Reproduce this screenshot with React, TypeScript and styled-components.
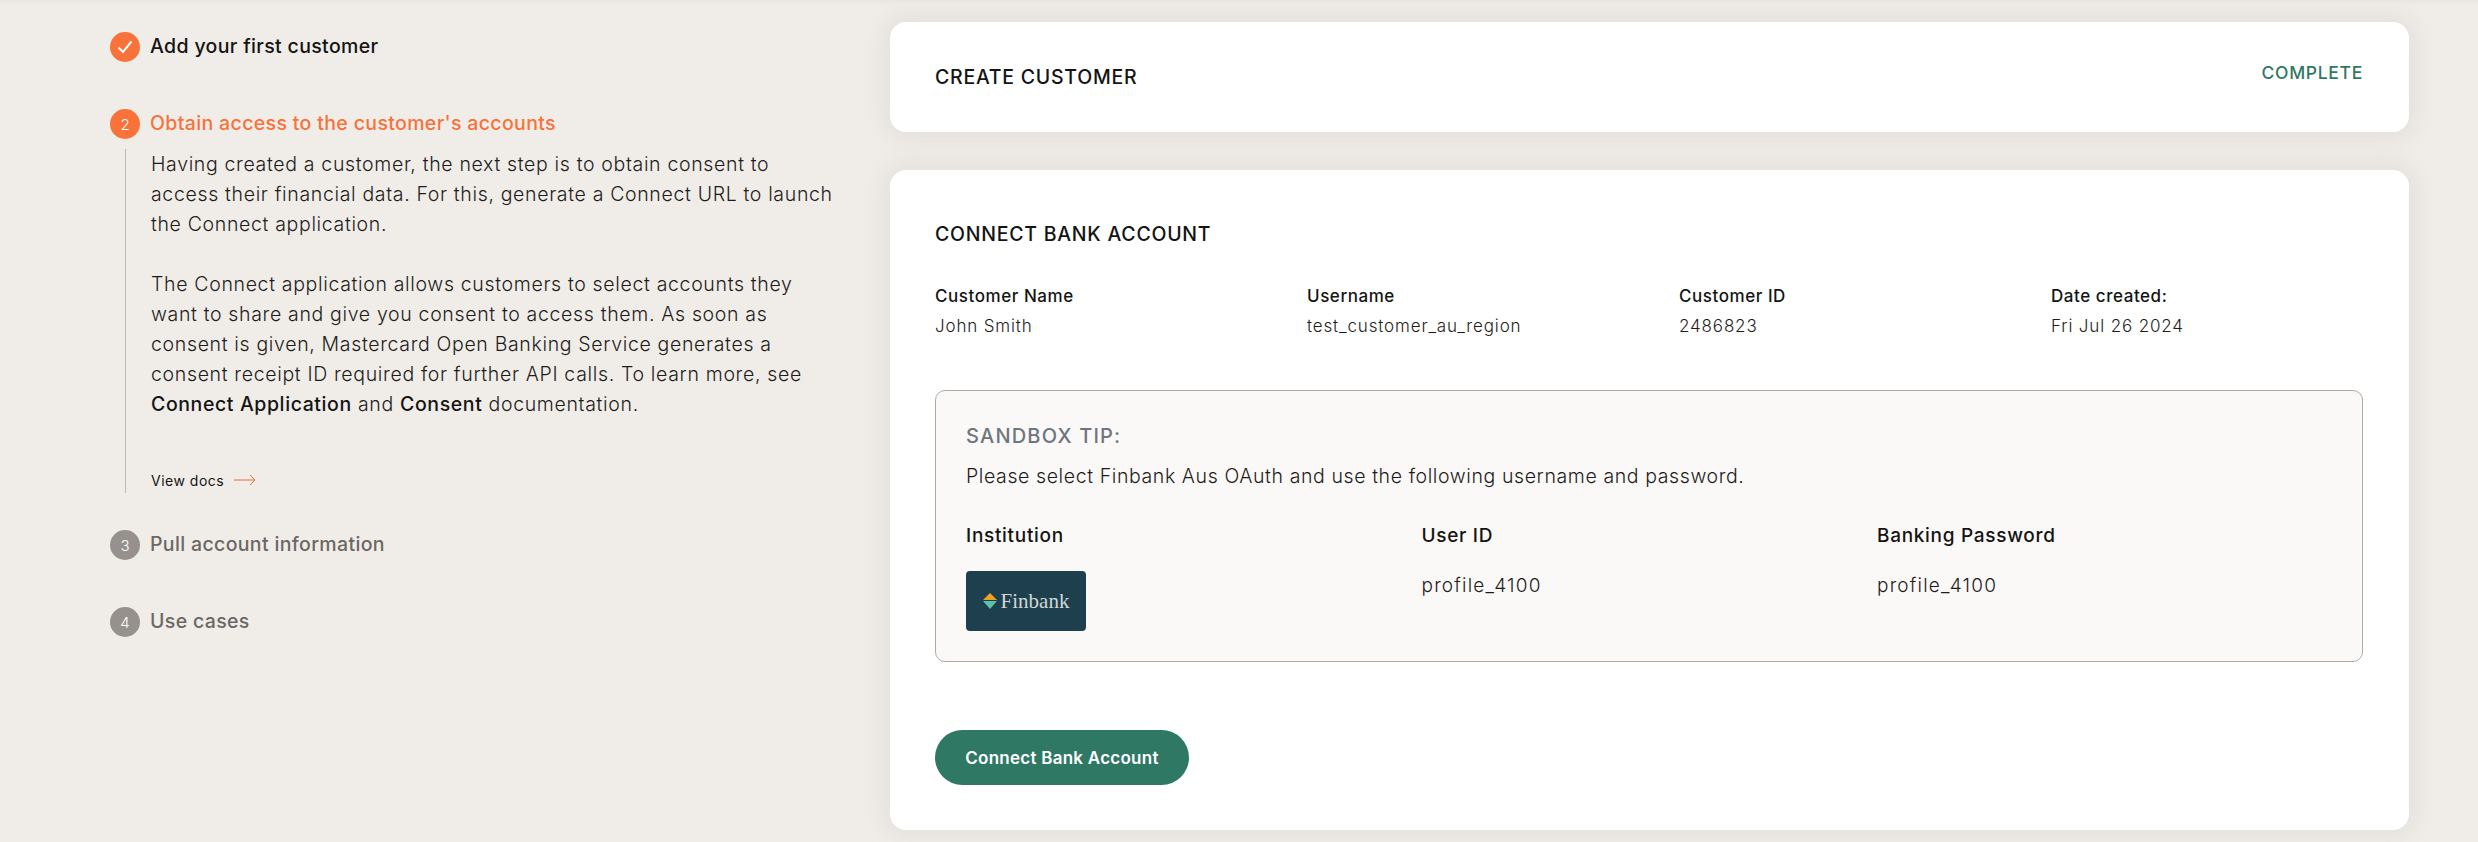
import styled, { createGlobalStyle } from "styled-components";

const GlobalStyle = createGlobalStyle`
  html, body {
    margin: 0;
    padding: 0;
    background: #f0ede9;
  }
  body {
    font-family: "Inter", "Open Sans", sans-serif;
    color: #141413;
  }
`;

const Page = styled.div`
  height: 842px;
  overflow: hidden;
  display: flex;
  box-shadow: inset 0 5px 5px -4px #e4e0dc;
`;

const Sidebar = styled.aside`
  box-sizing: border-box;
  width: 890px;
  padding: 32px 0 0 110px;
  display: flex;
  flex-direction: column;
  gap: 37px;
`;

const StepHead = styled.div`
  display: flex;
  align-items: flex-start;
  gap: 10px;
  padding-bottom: 10px;
`;

const Badge = styled.span<{ $muted?: boolean }>`
  width: 30px;
  height: 30px;
  border-radius: 50%;
  flex: none;
  display: flex;
  align-items: center;
  justify-content: center;
  background: ${(p) => (p.$muted ? "#96918d" : "#f87239")};
  color: #fff;
  font-size: 15px;
  font-weight: 300;
`;

const StepTitle = styled.span<{ $state: "done" | "active" | "todo" }>`
  font-size: 19.5px;
  line-height: 28px;
  font-weight: 500;
  letter-spacing: 0.35px;
  color: ${(p) =>
    p.$state === "active" ? "#f87239" : p.$state === "todo" ? "#6b6764" : "#141413"};
`;

const StepBody = styled.div`
  margin-left: 15px;
  padding: 0 0 2px 25px;
  border-left: 1px solid #bdb8b3;
`;

const Paragraph = styled.p`
  margin: 0 0 30px;
  font-size: 19.5px;
  line-height: 30px;
  font-weight: 300;
  letter-spacing: 0.66px;
  color: #1e1c1b;
  white-space: nowrap;

  &:last-of-type {
    margin-bottom: 0;
  }

  b {
    font-weight: 500;
    letter-spacing: 0.6px;
    color: #141413;
  }
`;

const DocsLink = styled.a`
  display: flex;
  align-items: center;
  gap: 10px;
  height: 22px;
  margin-top: 50px;
  font-size: 14px;
  letter-spacing: 0.5px;
  color: #141413;
`;

const Content = styled.main`
  width: 1519px;
  padding-top: 22px;
  display: flex;
  flex-direction: column;
  gap: 38px;
`;

const Card = styled.section`
  box-sizing: border-box;
  background: #fff;
  border-radius: 16px;
  box-shadow: 0 0 24px 8px #e4e0dc;
`;

const CreateCard = styled(Card)`
  height: 110px;
  padding: 0 46px 0 45px;
  display: flex;
  align-items: center;
  justify-content: space-between;
`;

const ConnectCard = styled(Card)`
  height: 660px;
  padding: 51px 46px 0 45px;
`;

const CardTitle = styled.h2`
  margin: 0;
  font-size: 19.5px;
  line-height: 26px;
  font-weight: 500;
  letter-spacing: 0.75px;
  color: #141413;
`;

const Complete = styled.span`
  font-size: 17.5px;
  font-weight: 500;
  letter-spacing: 0.7px;
  color: #2f7864;
  margin-bottom: 10px;
`;

const MetaGrid = styled.dl`
  margin: 37px 0 0;
  display: grid;
  grid-template-columns: repeat(4, 372px);
`;

const MetaItem = styled.div`
  display: flex;
  flex-direction: column;
  gap: 6px;
`;

const MetaLabel = styled.dt`
  font-size: 17px;
  line-height: 24px;
  font-weight: 500;
  letter-spacing: 0.55px;
  color: #141413;
`;

const MetaValue = styled.dd`
  margin: 0;
  font-size: 17px;
  line-height: 24px;
  font-weight: 300;
  letter-spacing: 0.85px;
  color: #1e1c1b;
`;

const TipBox = styled.div`
  box-sizing: border-box;
  height: 272px;
  margin-top: 52px;
  padding: 33px 30px 0;
  background: #fbf9f7;
  border: 1.5px solid #b3aba3;
  border-radius: 10px;
`;

const TipTitle = styled.div`
  font-size: 20px;
  line-height: 24px;
  font-weight: 500;
  letter-spacing: 1.2px;
  color: #6e7580;
`;

const TipText = styled.p`
  margin: 16px 0 0;
  font-size: 19.5px;
  line-height: 24px;
  font-weight: 300;
  letter-spacing: 0.6px;
  color: #1e1c1b;
`;

const CredGrid = styled.div`
  margin-top: 36px;
  display: grid;
  grid-template-columns: repeat(3, 455.5px);
`;

const CredLabel = styled.div`
  font-size: 19px;
  line-height: 24px;
  font-weight: 500;
  letter-spacing: 0.7px;
  color: #141413;
`;

const CredValue = styled.div`
  margin-top: 26px;
  font-size: 19px;
  line-height: 24px;
  font-weight: 300;
  letter-spacing: 1.2px;
  color: #1e1c1b;
`;

const Logo = styled.div`
  margin-top: 23px;
  width: 120px;
  height: 60px;
  border-radius: 4px;
  background: #1e3f4d;
  display: flex;
  align-items: center;
  justify-content: center;
  gap: 4px;
`;

const LogoName = styled.span`
  font-family: "Liberation Serif", serif;
  font-size: 21px;
  color: #d2d8d8;
`;

const ConnectButton = styled.button`
  display: block;
  margin-top: 68px;
  width: 254px;
  height: 55px;
  border: 0;
  border-radius: 28px;
  background: #2f7864;
  color: #fff;
  font-family: inherit;
  font-size: 17px;
  font-weight: 600;
  letter-spacing: 0.25px;
`;

const meta = [
  ["Customer Name", "John Smith"],
  ["Username", "test_customer_au_region"],
  ["Customer ID", "2486823"],
  ["Date created:", "Fri Jul 26 2024"],
];

function App() {
  return (
    <>
      <GlobalStyle />
      <Page>
        <Sidebar>
          <div>
            <StepHead>
              <Badge>
                <svg width="16" height="14" viewBox="0 0 16 14" fill="none">
                  <path d="M1.5 7.5 L6 12 L14.5 1.5" stroke="#fff" strokeWidth="2" />
                </svg>
              </Badge>
              <StepTitle $state="done">Add your first customer</StepTitle>
            </StepHead>
          </div>
          <div>
            <StepHead>
              <Badge>2</Badge>
              <StepTitle $state="active">Obtain access to the customer's accounts</StepTitle>
            </StepHead>
            <StepBody>
              <Paragraph>
                Having created a customer, the next step is to obtain consent to
                <br />
                access their financial data. For this, generate a Connect URL to launch
                <br />
                the Connect application.
              </Paragraph>
              <Paragraph>
                The Connect application allows customers to select accounts they
                <br />
                want to share and give you consent to access them. As soon as
                <br />
                consent is given, Mastercard Open Banking Service generates a
                <br />
                consent receipt ID required for further API calls. To learn more, see
                <br />
                <b>Connect Application</b> and <b>Consent</b> documentation.
              </Paragraph>
              <DocsLink>
                View docs
                <svg width="22" height="12" viewBox="0 0 22 12" fill="none">
                  <path d="M0 6 H21 M16 1 L21 6 L16 11" stroke="#e2703a" strokeWidth="1" />
                </svg>
              </DocsLink>
            </StepBody>
          </div>
          <div>
            <StepHead>
              <Badge $muted>3</Badge>
              <StepTitle $state="todo">Pull account information</StepTitle>
            </StepHead>
          </div>
          <div>
            <StepHead>
              <Badge $muted>4</Badge>
              <StepTitle $state="todo">Use cases</StepTitle>
            </StepHead>
          </div>
        </Sidebar>
        <Content>
          <CreateCard>
            <CardTitle>CREATE CUSTOMER</CardTitle>
            <Complete>COMPLETE</Complete>
          </CreateCard>
          <ConnectCard>
            <CardTitle>CONNECT BANK ACCOUNT</CardTitle>
            <MetaGrid>
              {meta.map(([label, value]) => (
                <MetaItem key={label}>
                  <MetaLabel>{label}</MetaLabel>
                  <MetaValue>{value}</MetaValue>
                </MetaItem>
              ))}
            </MetaGrid>
            <TipBox>
              <TipTitle>SANDBOX TIP:</TipTitle>
              <TipText>
                Please select Finbank Aus OAuth and use the following username and password.
              </TipText>
              <CredGrid>
                <div>
                  <CredLabel>Institution</CredLabel>
                  <Logo>
                    <svg width="14" height="16" viewBox="0 0 14 16">
                      <path d="M7 0 L14 7 H0 Z" fill="#f0a020" />
                      <path d="M0 8 H14 L7 16 Z" fill="#5fc0a8" />
                    </svg>
                    <LogoName>Finbank</LogoName>
                  </Logo>
                </div>
                <div>
                  <CredLabel>User ID</CredLabel>
                  <CredValue>profile_4100</CredValue>
                </div>
                <div>
                  <CredLabel>Banking Password</CredLabel>
                  <CredValue>profile_4100</CredValue>
                </div>
              </CredGrid>
            </TipBox>
            <ConnectButton>Connect Bank Account</ConnectButton>
          </ConnectCard>
        </Content>
      </Page>
    </>
  );
}

export default App;
